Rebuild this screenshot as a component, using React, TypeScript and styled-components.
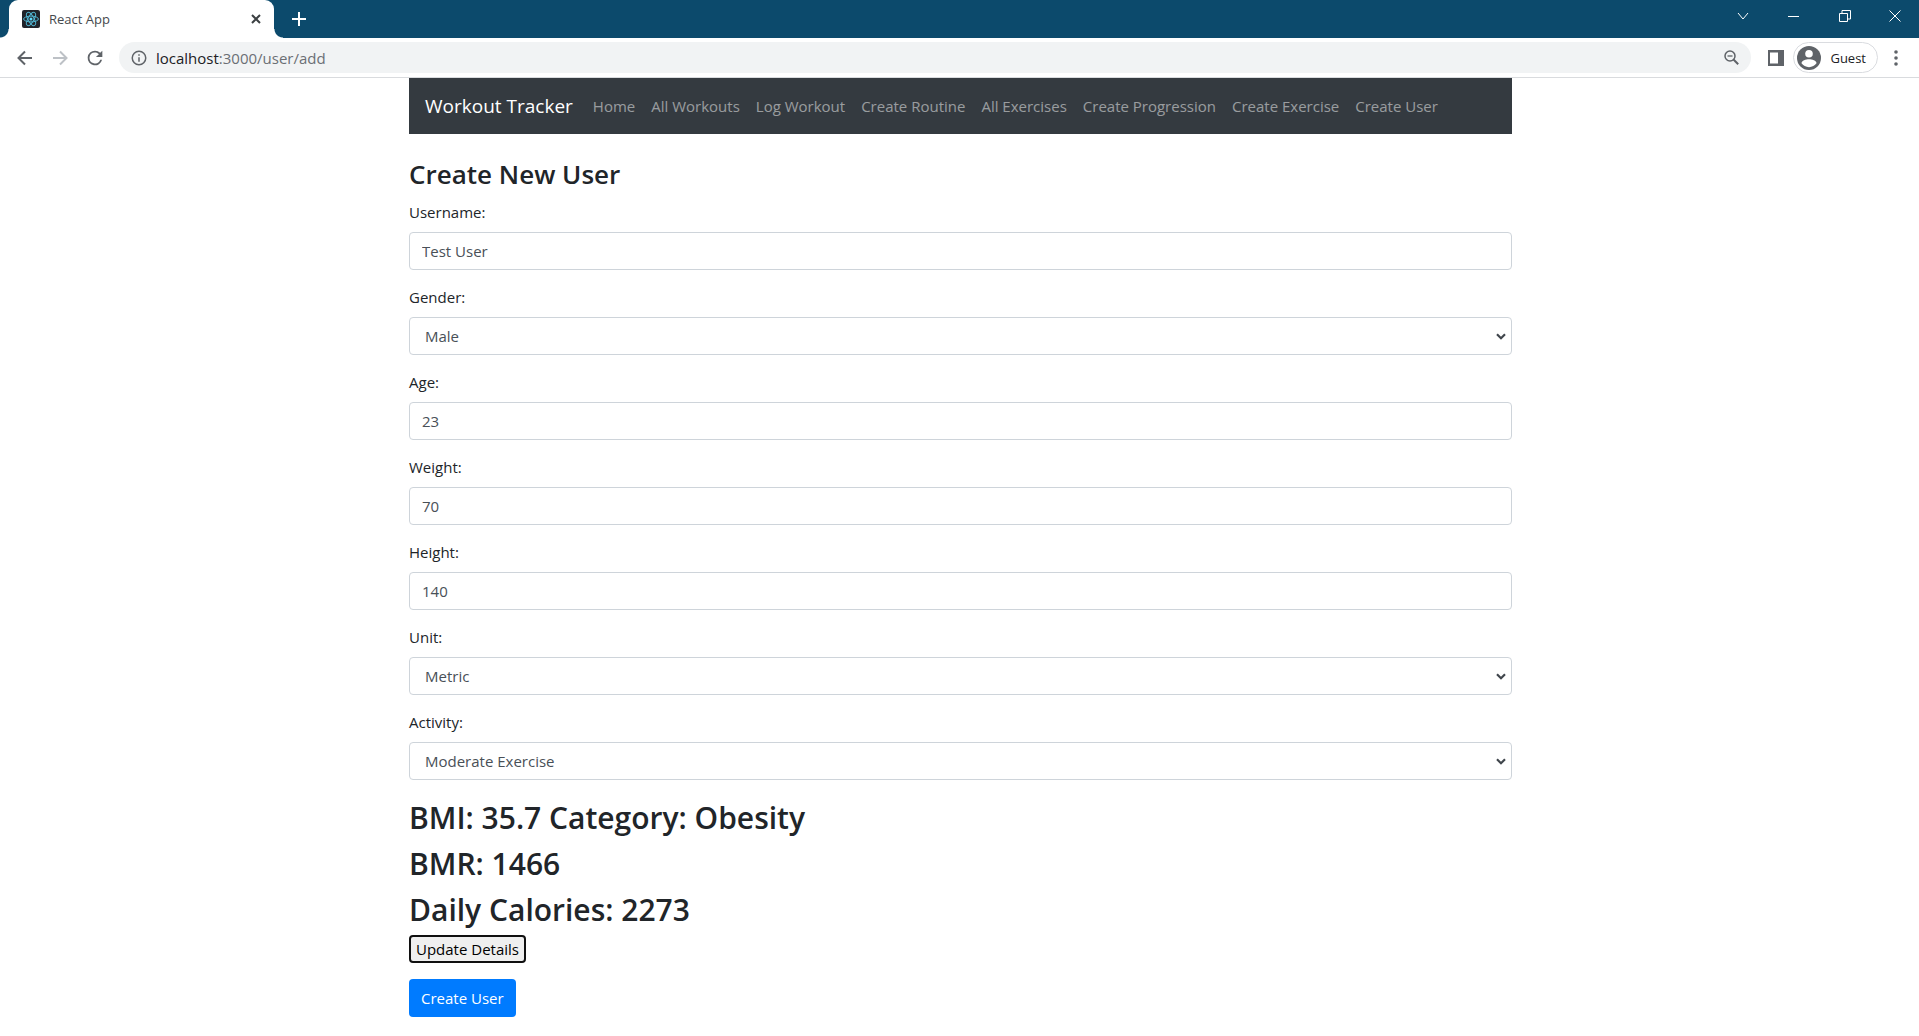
import React, { useState } from "react";
import styled, { createGlobalStyle } from "styled-components";

const uiFont = `"Segoe UI", "Open Sans", "Noto Sans", sans-serif`;

const GlobalStyle = createGlobalStyle`
  *, *::before, *::after { box-sizing: border-box; }
  body {
    margin: 0;
    background: #fff;
    color: #212529;
    font-family: ${uiFont};
    font-size: 15px;
    line-height: 24px;
  }
  button, input, select { font-family: inherit; }
`;

/* ---------- browser window ---------- */

const TitleBar = styled.div`
  display: flex;
  align-items: stretch;
  height: 38px;
  padding-left: 9px;
  background: #0c4a6c;
`;

const Tab = styled.div`
  position: relative;
  display: flex;
  align-items: center;
  gap: 9px;
  width: 265px;
  padding: 0 10px 0 13px;
  border-radius: 9px 9px 0 0;
  background: #fff;
  &::before,
  &::after {
    content: "";
    position: absolute;
    bottom: 0;
    width: 9px;
    height: 9px;
  }
  &::before {
    right: 100%;
    background: radial-gradient(circle at 0 0, transparent 8px, #fff 9px);
  }
  &::after {
    left: 100%;
    background: radial-gradient(circle at 100% 0, transparent 8px, #fff 9px);
  }
`;

const TabTitle = styled.span`
  flex: 1;
  font-size: 13px;
  color: #45494d;
`;

const IconButton = styled.button<{ $w?: number; $color?: string }>`
  display: flex;
  align-items: center;
  justify-content: center;
  width: ${(p) => p.$w ?? 35}px;
  padding: 0;
  border: 0;
  background: none;
  color: ${(p) => p.$color ?? "#5f6368"};
`;

const NewTab = styled(IconButton)`
  margin-left: 7px;
`;

const WindowControls = styled.div`
  display: flex;
  margin-left: auto;
  height: 32px;
`;

const Toolbar = styled.div`
  display: flex;
  align-items: center;
  height: 40px;
  padding: 0 6px 0 7px;
  border-bottom: 1px solid #d9dbde;
  background: #fff;
`;

const AddressBar = styled.div`
  display: flex;
  flex: 1;
  align-items: center;
  gap: 8px;
  height: 31px;
  margin: 0 7px;
  padding: 0 10px 0 11px;
  border-radius: 16px;
  background: #f1f3f4;
`;

const Address = styled.div`
  flex: 1;
  font-size: 15px;
  line-height: 22px;
  color: #6b6f74;
  b {
    font-weight: 400;
    color: #202124;
  }
`;

const GuestChip = styled.button`
  display: flex;
  align-items: center;
  gap: 9px;
  height: 31px;
  padding: 0 11px 0 3px;
  border: 1px solid #dadce0;
  border-radius: 16px;
  background: #fff;
  color: #202124;
  font-size: 13px;
`;

/* ---------- page ---------- */

const Container = styled.div`
  max-width: 1135px;
  margin: 0 auto;
  padding: 0 15px 0 17px;
`;

const Navbar = styled.nav`
  display: flex;
  align-items: center;
  height: 56px;
  padding: 0 16px;
  background: #343a40;
`;

const Brand = styled.a`
  margin-right: 12px;
  color: #fff;
  font-size: 19px;
  text-decoration: none;
  white-space: nowrap;
`;

const NavList = styled.ul`
  display: flex;
  margin: 0;
  padding: 0;
  list-style: none;
`;

const NavLink = styled.a`
  display: block;
  padding: 8px;
  color: rgba(255, 255, 255, 0.5);
  text-decoration: none;
  white-space: nowrap;
`;

const Main = styled.main`
  padding-top: 23px;
`;

const PageTitle = styled.h3`
  margin: 0 0 10px;
  font-size: 26px;
  font-weight: 600;
  line-height: 34px;
`;

const Field = styled.div`
  margin-bottom: 16px;
`;

const Label = styled.label`
  display: block;
  margin-bottom: 9px;
  line-height: 22px;
`;

const controlStyles = `
  display: block;
  width: 100%;
  height: 38px;
  border: 1px solid #ced4da;
  border-radius: 4px;
  background-color: #fff;
  color: #495057;
  font-size: 15px;
`;

const TextInput = styled.input`
  ${controlStyles}
  padding: 6px 12px;
`;

const chevron = encodeURIComponent(
  `<svg xmlns="http://www.w3.org/2000/svg" width="10" height="7" viewBox="0 0 10 7"><path d="M1 1.200l4 4 4-4" fill="none" stroke="#41474d" stroke-width="2.200"/></svg>`
);

const Select = styled.select`
  ${controlStyles}
  appearance: none;
  padding: 6px 24px 6px 15px;
  background-image: url("data:image/svg+xml,${chevron}");
  background-repeat: no-repeat;
  background-position: right 5px center;
`;

const Results = styled.section`
  display: flex;
  flex-direction: column;
  gap: 8px;
  margin: 19px 0 6px;
`;

const Result = styled.h2`
  margin: 0;
  font-size: 30px;
  font-weight: 600;
  line-height: 38px;
`;

const UpdateButton = styled.button`
  display: block;
  height: 28px;
  margin-bottom: 16px;
  padding: 0 5px;
  border: 2px solid #101010;
  border-radius: 4px;
  background: #efefef;
  color: #000;
  font-size: 15px;
`;

const SubmitButton = styled.button`
  display: block;
  height: 38px;
  padding: 0 12px;
  border: 0;
  border-radius: 4px;
  background: #007bff;
  color: #fff;
  font-size: 15px;
`;

const ReactLogo = () => (
  <svg width="18" height="18" viewBox="0 0 18 18" aria-hidden="true">
    <rect width="18" height="18" rx="2" fill="#20232a" />
    <g fill="none" stroke="#4fb3cf" strokeWidth="1">
      <ellipse cx="9" cy="9" rx="7.4" ry="2.9" />
      <ellipse cx="9" cy="9" rx="7.4" ry="2.9" transform="rotate(60 9 9)" />
      <ellipse cx="9" cy="9" rx="7.4" ry="2.9" transform="rotate(120 9 9)" />
    </g>
    <circle cx="9" cy="9" r="1.5" fill="#61dafb" />
  </svg>
);

type StrokeProps = { size: number; d: string; width?: number };

const Stroke = ({ size, d, width = 2 }: StrokeProps) => (
  <svg
    width={size}
    height={size}
    viewBox={`0 0 ${size} ${size}`}
    fill="none"
    stroke="currentColor"
    strokeWidth={width}
    aria-hidden="true"
  >
    <path d={d} />
  </svg>
);

const Reload = () => (
  <svg width="22" height="22" viewBox="0 0 24 24" fill="currentColor" aria-hidden="true">
    <path d="M17.65 6.35A7.96 7.96 0 0 0 12 4a8 8 0 1 0 7.73 10h-2.08A6 6 0 1 1 12 6c1.66 0 3.14.69 4.22 1.78L13 11h7V4z" />
  </svg>
);

const Info = () => (
  <svg width="18" height="18" viewBox="0 0 24 24" fill="#5f6368" aria-hidden="true">
    <path d="M11 7h2v2h-2zm0 4h2v6h-2zm1-9a10 10 0 1 0 0 20 10 10 0 0 0 0-20zm0 18a8 8 0 1 1 0-16 8 8 0 0 1 0 16z" />
  </svg>
);

const ZoomOut = () => (
  <svg width="15" height="15" viewBox="0 0 15 15" fill="none" stroke="currentColor" aria-hidden="true">
    <circle cx="6" cy="6" r="5" strokeWidth="1.500" />
    <path d="M9.500 9.500l4.700 4.700" strokeWidth="2" />
    <path d="M3.500 6h5" strokeWidth="1.300" />
  </svg>
);

const SidePanel = () => (
  <svg width="16" height="16" viewBox="0 0 16 16" aria-hidden="true">
    <path fill="#5f6368" fillRule="evenodd" d="M0 0h16v16H0zM2 2.500v11h8v-11z" />
  </svg>
);

const Avatar = () => (
  <svg width="24" height="24" viewBox="0 0 24 24" aria-hidden="true">
    <circle cx="12" cy="12" r="12" fill="#5f6368" />
    <circle cx="12" cy="7.800" r="3.800" fill="#fff" />
    <path fill="#fff" d="M4.500 17.300c0-2.800 4.500-4 7.500-4s7.500 1.200 7.500 4c-1.600 2.300-4.400 3.900-7.500 3.900s-5.900-1.600-7.500-3.900z" />
  </svg>
);

const Dots = () => (
  <svg width="4" height="16" viewBox="0 0 4 16" fill="#5f6368" aria-hidden="true">
    <circle cx="2" cy="2" r="1.800" />
    <circle cx="2" cy="8" r="1.800" />
    <circle cx="2" cy="14" r="1.800" />
  </svg>
);

const links = [
  "Home",
  "All Workouts",
  "Log Workout",
  "Create Routine",
  "All Exercises",
  "Create Progression",
  "Create Exercise",
  "Create User",
];

type FieldSpec = { id: string; label: string; value: string; options?: string[] };

const fields: FieldSpec[] = [
  { id: "username", label: "Username:", value: "Test User" },
  { id: "gender", label: "Gender:", value: "Male", options: ["Male", "Female"] },
  { id: "age", label: "Age:", value: "23" },
  { id: "weight", label: "Weight:", value: "70" },
  { id: "height", label: "Height:", value: "140" },
  { id: "unit", label: "Unit:", value: "Metric", options: ["Metric", "Imperial"] },
  {
    id: "activity",
    label: "Activity:",
    value: "Moderate Exercise",
    options: ["Little Exercise", "Light Exercise", "Moderate Exercise", "Heavy Exercise"],
  },
];

const Browser = () => (
  <header>
    <TitleBar>
      <Tab>
        <ReactLogo />
        <TabTitle>React App</TabTitle>
        <IconButton $w={16} $color="#3c4043" aria-label="Close tab">
          <Stroke size={10} d="M1 1l8 8M9 1l-8 8" />
        </IconButton>
      </Tab>
      <NewTab aria-label="New tab" $color="#fff">
        <Stroke size={14} d="M7 0v14M0 7h14" />
      </NewTab>
      <WindowControls>
        <IconButton $w={51} $color="#fff" aria-label="Search tabs">
          <Stroke size={12} width={1} d="M1 3l5 6 5-6" />
        </IconButton>
        <IconButton $w={51} $color="#fff" aria-label="Minimize">
          <Stroke size={11} width={1} d="M0 5.500h11" />
        </IconButton>
        <IconButton $w={51} $color="#fff" aria-label="Restore">
          <Stroke size={12} width={1} d="M.5 3.500h8v8h-8zM3 3.500v-3h8.500v8.500h-3" />
        </IconButton>
        <IconButton $w={49} $color="#fff" aria-label="Close">
          <Stroke size={12} width={1} d="M.5.5l11 11M11.500.5l-11 11" />
        </IconButton>
      </WindowControls>
    </TitleBar>
    <Toolbar>
      <IconButton aria-label="Back">
        <Stroke size={16} d="M15 8H2M8 1.500L1.500 8 8 14.500" />
      </IconButton>
      <IconButton aria-label="Forward" $color="#bdc1c6">
        <Stroke size={16} d="M1 8h13M8 1.500l6.500 6.500L8 14.500" />
      </IconButton>
      <IconButton aria-label="Reload">
        <Reload />
      </IconButton>
      <AddressBar>
        <Info />
        <Address>
          <b>localhost</b>:3000/user/add
        </Address>
        <IconButton $w={20} aria-label="Zoom">
          <ZoomOut />
        </IconButton>
      </AddressBar>
      <IconButton aria-label="Side panel">
        <SidePanel />
      </IconButton>
      <GuestChip>
        <Avatar />
        Guest
      </GuestChip>
      <IconButton aria-label="Menu">
        <Dots />
      </IconButton>
    </Toolbar>
  </header>
);

export default function App() {
  const [values, setValues] = useState<Record<string, string>>(
    Object.fromEntries(fields.map((f) => [f.id, f.value]))
  );
  const update = (id: string) => (e: { target: { value: string } }) =>
    setValues({ ...values, [id]: e.target.value });

  return (
    <>
      <GlobalStyle />
      <Browser />
      <Container>
        <Navbar>
          <Brand href="#">Workout Tracker</Brand>
          <NavList>
            {links.map((text) => (
              <li key={text}>
                <NavLink href="#">{text}</NavLink>
              </li>
            ))}
          </NavList>
        </Navbar>
        <Main>
          <PageTitle>Create New User</PageTitle>
          <form onSubmit={(e) => e.preventDefault()}>
            {fields.map((f) => (
              <Field key={f.id}>
                <Label htmlFor={f.id}>{f.label}</Label>
                {f.options ? (
                  <Select id={f.id} value={values[f.id]} onChange={update(f.id)}>
                    {f.options.map((o) => (
                      <option key={o}>{o}</option>
                    ))}
                  </Select>
                ) : (
                  <TextInput id={f.id} type="text" value={values[f.id]} onChange={update(f.id)} />
                )}
              </Field>
            ))}
            <Results>
              <Result>BMI: 35.7 Category: Obesity</Result>
              <Result>BMR: 1466</Result>
              <Result>Daily Calories: 2273</Result>
            </Results>
            <UpdateButton type="button">Update Details</UpdateButton>
            <SubmitButton type="submit">Create User</SubmitButton>
          </form>
        </Main>
      </Container>
    </>
  );
}
